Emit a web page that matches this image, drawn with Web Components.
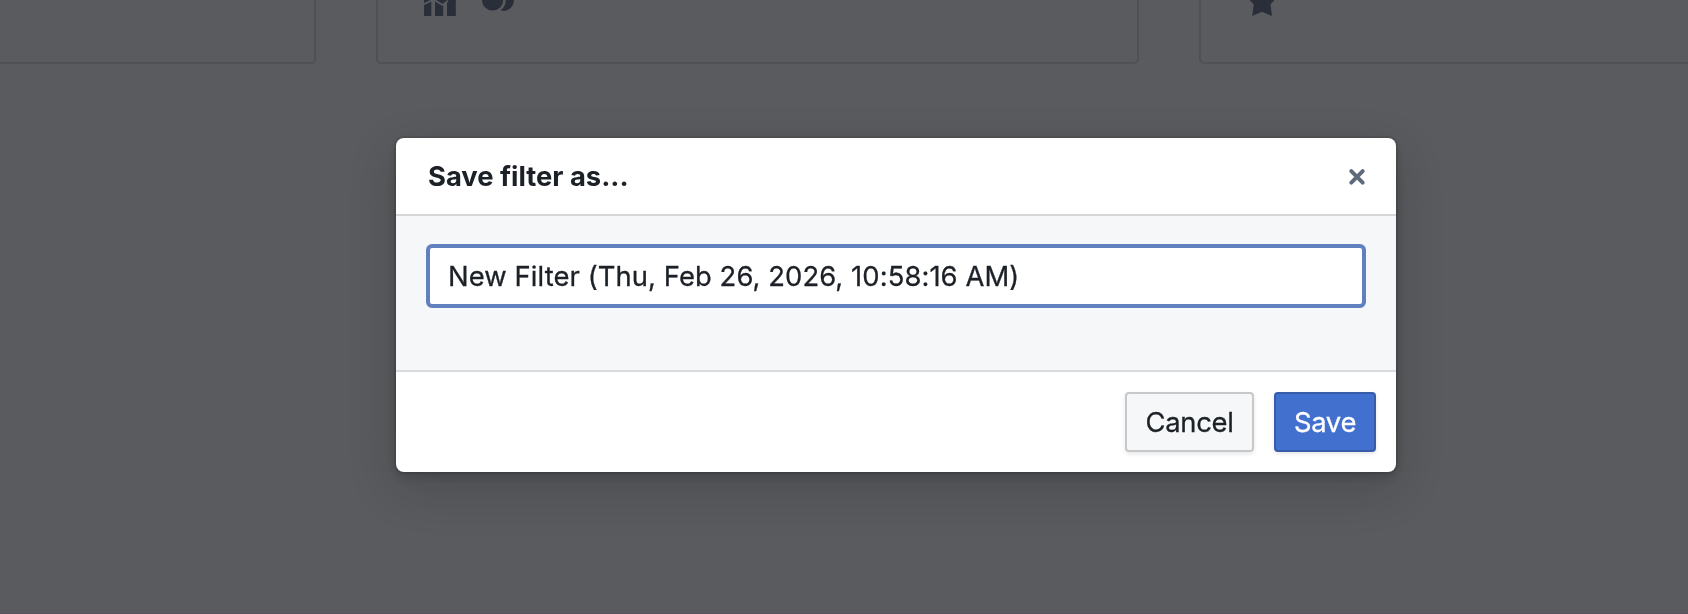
<!DOCTYPE html>
<html lang="en">
<head>
<meta charset="utf-8">
<title>Filters</title>
<style>
  html, body { margin: 0; height: 100%; overflow: hidden; }
  body { background: #5a5b5e; font-family: Inter, "Liberation Sans", sans-serif; color: #1c2127; }
</style>
</head>
<body>
<filter-page>
  <tool-card><tool-icon name="chart"></tool-icon><tool-icon name="circles"></tool-icon></tool-card>
</filter-page>
<script>
const ICONS = {
  chart: `<path d="M0 16H7.3V32H0zM11 15H19.2V32H11zM23 12H31.8V32H23z"/>
    <path d="M0 20 9.5 15.3 18.5 20.8 24 16.5" fill="none" stroke="#5a5b5e" stroke-width="2"/>
    <path d="M0 17 9.5 12 18.5 17.3 32 7.5" fill="none" stroke="currentColor" stroke-width="4"/>`,
  circles: '<circle cx="10.6" cy="16" r="10.6"/><path d="M18.6 26.3c7-5 7-15 0-20a10.2 10.5 0 1 1 0 20z"/>',
  star: '<path d="M15 0l4 11 12 1-7.5 8.5L25 32l-10-4.2L5.2 32 6.8 20.5-1 12l12-1z"/>',
  cross: '<path d="M10.3 11.2 21.7 22.6M21.7 11.2 10.3 22.6" fill="none" stroke="currentColor" stroke-width="4" stroke-linecap="round"/>'
};

class ToolIcon extends HTMLElement {
  connectedCallback() {
    this.attachShadow({ mode: "open" }).innerHTML = `
      <style>
        :host { display: block; width: 32px; height: 32px; }
        svg { display: block; fill: currentColor; overflow: visible; }
      </style>
      <svg width="32" height="32" viewBox="0 0 32 32">${ICONS[this.getAttribute("name")]}</svg>`;
  }
}

class ToolCard extends HTMLElement {
  connectedCallback() {
    this.attachShadow({ mode: "open" }).innerHTML = `
      <style>
        :host {
          display: flex; align-items: flex-end; gap: 26px;
          box-sizing: border-box; height: 104px; padding: 0 46px 46px;
          border: 2px solid #505154; border-radius: 5px; color: #292e39;
        }
      </style>
      <slot></slot>`;
  }
}

class FilterButton extends HTMLElement {
  connectedCallback() {
    this.attachShadow({ mode: "open" }).innerHTML = `
      <style>
        :host { display: block; }
        button {
          box-sizing: border-box; width: 100%; height: 60px; padding: 0;
          border: 2px solid #c7c8ca; border-radius: 4px; background: #f6f7f9;
          box-shadow: 0 2px 4px rgba(17, 20, 24, .1);
          font: inherit; color: inherit; letter-spacing: -.3px;
          -webkit-text-stroke: .3px currentColor;
        }
        :host([primary]) button { background: #4270cf; border-color: #365caa; color: #fff; }
      </style>
      <button><slot></slot></button>`;
  }
}

class SaveDialog extends HTMLElement {
  connectedCallback() {
    this.attachShadow({ mode: "open" }).innerHTML = `
      <style>
        :host {
          display: flex; flex-direction: column; width: 1000px; height: 334px;
          border-radius: 8px; background: #fff; overflow: hidden; font-size: 27.4px;
          box-shadow: 0 0 0 2px rgba(17, 20, 24, .1), 0 4px 8px rgba(17, 20, 24, .2), 0 16px 48px rgba(17, 20, 24, .2);
        }
        header {
          display: flex; align-items: center; justify-content: space-between;
          box-sizing: border-box; height: 78px; padding: 0 23px 0 32px; border-bottom: 2px solid #d5d6d7;
        }
        h2 { margin: 0; font-size: 27.4px; font-weight: 700; letter-spacing: -.02px; }
        tool-icon { color: #5f6b7c; }
        main { flex: 1; padding: 28px 30px; background: #f6f7f9; }
        input {
          display: block; box-sizing: border-box; width: 100%; height: 64px; padding: 0 18px;
          border: 4px solid #6080be; border-radius: 6px; outline: 0; background: #fff;
          font: inherit; color: inherit; letter-spacing: .08px;
          -webkit-text-stroke: .3px currentColor;
        }
        footer {
          display: flex; justify-content: flex-end; gap: 20px;
          box-sizing: border-box; height: 102px; padding: 20px; border-top: 2px solid #d9dadb;
        }
        .cancel { width: 129px; }
        .save { width: 102px; }
      </style>
      <header><h2><slot name="title"></slot></h2><tool-icon name="cross"></tool-icon></header>
      <main><input value="${this.getAttribute("value")}"></main>
      <footer>
        <filter-button class="cancel">Cancel</filter-button>
        <filter-button class="save" primary>Save</filter-button>
      </footer>`;
  }
}

class FilterPage extends HTMLElement {
  connectedCallback() {
    this.attachShadow({ mode: "open" }).innerHTML = `
      <style>
        :host { display: block; height: 614px; box-sizing: border-box; overflow: hidden; border-bottom: 1px solid #5a525f; }
        .cards { display: grid; grid-template-columns: 376px 763px 763px; gap: 60px; margin: -40px 0 0 -60px; }
        .overlay { position: fixed; inset: 0; display: flex; justify-content: center; align-items: flex-start; padding: 138px 0 0 104px; }
      </style>
      <div class="cards">
        <tool-card></tool-card>
        <slot></slot>
        <tool-card><tool-icon name="star"></tool-icon></tool-card>
      </div>
      <div class="overlay">
        <save-dialog value="New Filter (Thu, Feb 26, 2026, 10:58:16 AM)"><span slot="title">Save filter as...</span></save-dialog>
      </div>`;
  }
}

customElements.define("tool-icon", ToolIcon);
customElements.define("tool-card", ToolCard);
customElements.define("filter-button", FilterButton);
customElements.define("save-dialog", SaveDialog);
customElements.define("filter-page", FilterPage);
</script>
</body>
</html>
